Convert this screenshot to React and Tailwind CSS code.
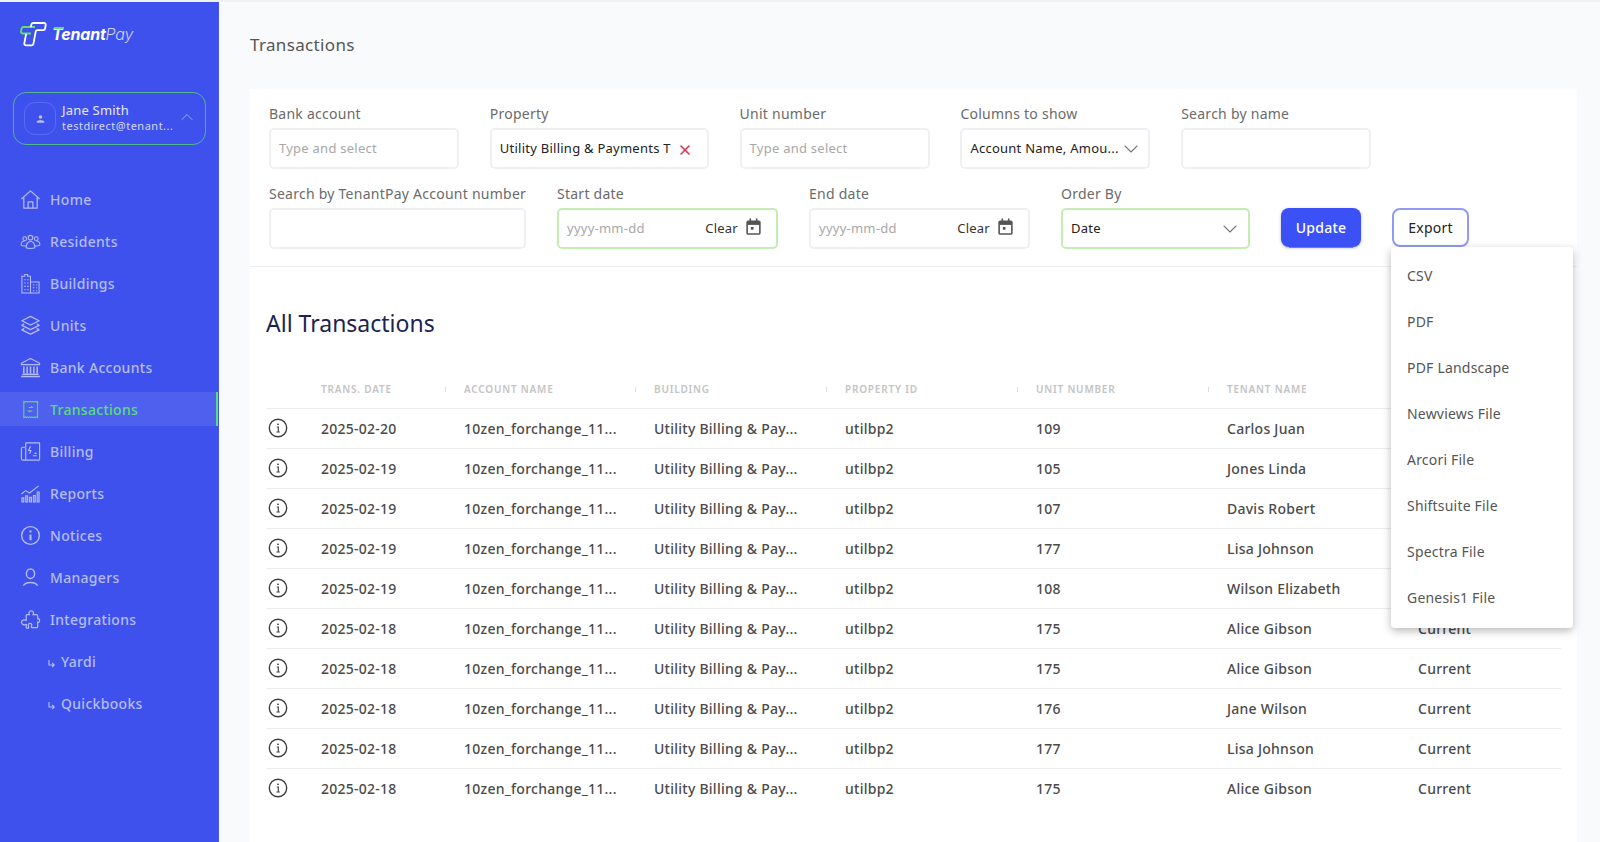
import React from 'react';
import { ChevronDown, ChevronUp, X } from 'lucide-react';

const navIcon = 'w-[21px] h-[21px] shrink-0';

const icons = {
    home: (
        <svg viewBox="0 0 22 22" fill="none" stroke="currentColor" strokeWidth="1.3" strokeLinejoin="round" className={navIcon}>
            <path d="M1.5 10.5 11 2l9.5 8.5" />
            <path d="M4 9v11h14V9" />
            <path d="M8.5 20v-6.5h5V20" />
        </svg>
    ),
    residents: (
        <svg viewBox="0 0 22 22" fill="none" stroke="currentColor" strokeWidth="1.1" className={navIcon}>
            <circle cx="11" cy="7" r="2.4" />
            <circle cx="5" cy="8" r="2" />
            <circle cx="17" cy="8" r="2" />
            <path d="M6.5 17.5c0-4 2-6.5 4.500-6.500s4.500 2.500 4.500 6.500c-1.500 1-7.500 1-9 0Z" />
            <path d="M6.500 15.500c-2 .5-4.500 0-5.300-1 0-2.500 1.300-4 3.800-4" />
            <path d="M15.500 15.500c2 .5 4.500 0 5.300-1 0-2.500-1.300-4-3.800-4" />
        </svg>
    ),
    buildings: (
        <svg viewBox="0 0 22 22" fill="none" stroke="currentColor" strokeWidth="1.1" className={navIcon}>
            <path d="M2 21V3.500h3V1.500h3v2h3V21Z" />
            <path d="M11 9.500h9V21h-9" />
            <path d="M4.500 7h1.500M7.500 7H9M4.500 10.500h1.500M7.500 10.500H9M4.500 14h1.500M7.500 14H9M4.500 17.500h1.500M7.500 17.500H9M13.500 12.500h1.500M17 12.500h1M13.500 15.500h1.500M17 15.500h1M13.500 18.500h1.500M17 18.500h1" />
        </svg>
    ),
    units: (
        <svg viewBox="0 0 22 22" fill="none" stroke="currentColor" strokeWidth="1.400" strokeLinejoin="round" className={navIcon}>
            <path d="M11 1.500 20 6l-9 4.500L2 6Z" />
            <path d="M4.500 9.200 2 10.800l9 4.500 9-4.500-2.500-1.600" />
            <path d="M4.500 14 2 15.500l9 4.500 9-4.500-2.500-1.500" />
        </svg>
    ),
    bank: (
        <svg viewBox="0 0 22 22" fill="none" stroke="currentColor" strokeWidth="1.200" strokeLinejoin="round" className={navIcon}>
            <path d="M11 1.500 20.500 6.500v1.500h-19V6.500Z" />
            <path d="M4 10v7M7.500 10v7M11 10v7M14.500 10v7M18 10v7" strokeWidth="1.600" />
            <path d="M2.500 18h17M1.200 20.500h19.600" strokeWidth="1.600" />
        </svg>
    ),
    transactions: (
        <svg viewBox="0 0 22 22" fill="none" stroke="currentColor" strokeWidth="1.100" className={navIcon}>
            <path d="M4 2.500l1.200.8 1.200-.8 1.200.8 1.200-.8 1.200.8 1.200-.8 1.200.8 1.200-.8 1.200.8 1.200-.8 1.200.8 1.200-.8V19.500l-1.200-.8-1.200.8-1.200-.8-1.200.8-1.200-.8-1.200.8-1.200-.8-1.200.8-1.200-.8-1.200.8-1.200-.8-1.200.8Z" />
            <path d="M9 9h4l-1.300-1.300M13 12.500H9l1.300 1.300" />
        </svg>
    ),
    billing: (
        <svg viewBox="0 0 22 22" fill="none" stroke="currentColor" strokeWidth="1.200" strokeLinejoin="round" className={navIcon}>
            <path d="M6 6.500H3a1.500 1.500 0 0 0-1.500 1.500v10.500A1.500 1.500 0 0 0 3 20h16.500a1 1 0 0 0 1-1V2H6Z" />
            <path d="M6 20V7" />
            <path d="M11 5.500 9 10h2.500L10 13.500" />
            <path d="M13.500 15.500h4M15 13h2.500" />
        </svg>
    ),
    reports: (
        <svg viewBox="0 0 22 22" fill="none" stroke="currentColor" strokeWidth="1.100" className={navIcon}>
            <path d="M1.500 11.500 6 8l4 2.500L19.500 3" />
            <path d="M2 20v-4.500h2V20ZM6 20v-6.500h2V20ZM10 20v-5h2V20ZM14 20v-7h2v7ZM18 20V9.500h2V20Z" fill="currentColor" fillOpacity="0.4" />
        </svg>
    ),
    notices: (
        <svg viewBox="0 0 22 22" fill="none" stroke="currentColor" strokeWidth="1.500" className={navIcon}>
            <circle cx="11" cy="11" r="9.300" />
            <path d="M11 10v6" strokeWidth="2.200" />
            <circle cx="11" cy="6.800" r="1.200" fill="currentColor" stroke="none" />
        </svg>
    ),
    managers: (
        <svg viewBox="0 0 22 22" fill="none" stroke="currentColor" strokeWidth="1.500" className={navIcon}>
            <ellipse cx="11" cy="7" rx="4.300" ry="5" />
            <path d="M3.500 19.500c1.500-2.200 4.300-3.300 7.500-3.300s6 1.100 7.500 3.300" />
        </svg>
    ),
    integrations: (
        <svg viewBox="0 0 22 22" fill="none" stroke="currentColor" strokeWidth="1.300" strokeLinejoin="round" className={navIcon}>
            <path d="M7 6h3c-1-1.200-1-4 1.800-4s2.800 2.800 1.700 4h3.500a1.500 1.500 0 0 1 1.500 1.500v3c1.200-.8 2-.5 2 1.500s-1 2.300-2 1.500v5a1 1 0 0 1-1 1H12v-1.500c1-1.500 0-3-1.500-3s-2.500 1.500-1.500 3V20H7.500a1 1 0 0 1-1-1v-3c-1.800 1-5 .5-5-2s3.200-3 5-2V7a1 1 0 0 1 .5-1Z" />
        </svg>
    ),
};

const navItems = [
    { label: 'Home', icon: 'home' },
    { label: 'Residents', icon: 'residents' },
    { label: 'Buildings', icon: 'buildings' },
    { label: 'Units', icon: 'units' },
    { label: 'Bank Accounts', icon: 'bank' },
    { label: 'Transactions', icon: 'transactions', active: true },
    { label: 'Billing', icon: 'billing' },
    { label: 'Reports', icon: 'reports' },
    { label: 'Notices', icon: 'notices' },
    { label: 'Managers', icon: 'managers' },
    { label: 'Integrations', icon: 'integrations' },
];

const exportOptions = ['CSV', 'PDF', 'PDF Landscape', 'Newviews File', 'Arcori File', 'Shiftsuite File', 'Spectra File', 'Genesis1 File'];

const columns = ['TRANS. DATE', 'ACCOUNT NAME', 'BUILDING', 'PROPERTY ID', 'UNIT NUMBER', 'TENANT NAME', 'STATUS'];

const rows = [
    ['2025-02-20', '109', 'Carlos Juan'],
    ['2025-02-19', '105', 'Jones Linda'],
    ['2025-02-19', '107', 'Davis Robert'],
    ['2025-02-19', '177', 'Lisa Johnson'],
    ['2025-02-19', '108', 'Wilson Elizabeth'],
    ['2025-02-18', '175', 'Alice Gibson'],
    ['2025-02-18', '175', 'Alice Gibson'],
    ['2025-02-18', '176', 'Jane Wilson'],
    ['2025-02-18', '177', 'Lisa Johnson'],
    ['2025-02-18', '175', 'Alice Gibson'],
];

function Logo() {
    return (
        <div className="flex items-center h-[26px] ml-[19px] mt-[19px]">
            <svg width="28" height="25" viewBox="0 0 28 25" fill="none" strokeWidth="1.800" strokeLinejoin="round" className="shrink-0">
                <path d="M16 5H4.500A2 2 0 0 0 2.600 6.500L2 9.500a1.700 1.700 0 0 0 1.700 2H12" stroke="#5fe06f" />
                <path d="M11.800 5l.5-2.300A2 2 0 0 1 14.200 1H25a1.700 1.700 0 0 1 1.700 2l-.6 3.500a2 2 0 0 1-2 1.700H18.500a1.800 1.800 0 0 0-1.800 1.500l-2.300 12.200a1.700 1.700 0 0 1-1.700 1.400H7a1.700 1.700 0 0 1-1.700-2l1.800-9.500" stroke="#ffffff" />
            </svg>
            <span className="relative ml-[5px] text-[16px] italic leading-none text-white font-['Inter',sans-serif] tracking-[-0.2px]">
                <span className="font-bold">Tenant</span>
                <span className="font-light text-[#cfd4fb]">Pay</span>
                <span className="absolute left-[2px] top-[1px] w-[10px] h-[2px] bg-[#5fe06f]" />
            </span>
        </div>
    );
}

function UserCard() {
    return (
        <div className="ml-[13px] mt-[45px] h-[53px] w-[193px] rounded-[13px] border border-[#4fb98a] flex items-center pl-[10px] pr-[8px]">
            <div className="w-[32px] h-[33px] rounded-[11px] border border-[#5c6cf2] flex items-center justify-center shrink-0">
                <svg width="9" height="10" viewBox="0 0 11 11" fill="#b9c0fa">
                    <circle cx="5.500" cy="3" r="2.200" />
                    <path d="M1 10.200V8.600c0-.8 1.800-1.600 4.500-1.600s4.500.8 4.500 1.600v1.600Z" />
                </svg>
            </div>
            <div className="ml-[6px] min-w-0 flex-1 pb-[2px]">
                <div className="text-[13px] leading-[16px] tracking-[0.2px] text-[#e4e7fe]">Jane Smith</div>
                <div className="text-[11px] leading-[15px] tracking-[0.5px] text-[#d4d9fd] whitespace-nowrap">testdirect@tenant...</div>
            </div>
            <ChevronUp className="w-[20px] h-[20px] text-[#a6aff8] shrink-0 mb-[4px]" strokeWidth={1.1} />
        </div>
    );
}

function Sidebar() {
    return (
        <aside className="w-[219px] shrink-0 bg-[#3f51ed] text-[#b4bcfa] border-r border-[#4657f5]">
            <Logo />
            <UserCard />
            <nav className="mt-[33px]">
                {navItems.map((item) => (
                    <div key={item.label} className="h-[42px] flex items-center">
                        <div
                            className={
                                item.active
                                    ? 'w-full h-[34px] flex items-center pl-[20px] gap-[9px] bg-[#4f60ef] text-[#5ade7a] border-r-2 border-[#5ade7a]'
                                    : 'w-full h-[34px] flex items-center pl-[20px] gap-[9px]'
                            }
                        >
                            {icons[item.icon]}
                            <span className="text-[14px] tracking-[0.3px] font-medium">{item.label}</span>
                        </div>
                    </div>
                ))}
                {['Yardi', 'Quickbooks'].map((label) => (
                    <div key={label} className="h-[42px] flex items-center pl-[47px]">
                        <svg width="9" height="9" viewBox="0 0 9 9" fill="none" stroke="currentColor" strokeWidth="1.100" className="mt-[4px]">
                            <path d="M2 1v5h5M5.200 4l2 2-2 2" />
                        </svg>
                        <span className="ml-[5px] text-[14px] tracking-[0.3px] font-medium">{label}</span>
                    </div>
                ))}
            </nav>
        </aside>
    );
}

function Field({ label, width, children, green }) {
    return (
        <div style={{ width }} className="shrink-0">
            <div className="h-[20px] mb-[5px] text-[14px] leading-[21px] tracking-[0.25px] text-[#6b6b6b] whitespace-nowrap">{label}</div>
            <div
                className={
                    green
                        ? 'h-[41px] rounded-[5px] border-2 border-[#c3edb5] bg-white flex items-center px-[8px] text-[13px] tracking-[0.25px]'
                        : 'h-[41px] rounded-[5px] border-2 border-[#eef0f3] bg-white flex items-center px-[8px] text-[13px] tracking-[0.25px]'
                }
            >
                {children}
            </div>
        </div>
    );
}

function DateInput() {
    return (
        <>
            <span className="text-[#a8a8a8] flex-1">yyyy-mm-dd</span>
            <span className="text-[#333] mr-[8px]">Clear</span>
            <svg width="15" height="17" viewBox="0 0 14 16" fill="none" stroke="#555" strokeWidth="1.500" className="mr-[7px] mb-[4px]">
                <rect x="1" y="3" width="12" height="12" rx="1" />
                <path d="M1 5h12" strokeWidth="3" />
                <path d="M4 .5v3M10 .5v3" />
                <rect x="4.500" y="8.500" width="2.500" height="2.500" fill="#555" stroke="none" />
            </svg>
        </>
    );
}

function Filters() {
    return (
        <div className="pl-[19px] pt-[14px] h-[178px] border-b border-[#eceef3]">
            <div className="flex gap-[30.8px]">
                <Field label="Bank account" width="190px">
                    <span className="text-[#a8a8a8]">Type and select</span>
                </Field>
                <Field label="Property" width="219px">
                    <span className="text-[#222] whitespace-nowrap">Utility Billing &amp; Payments T</span>
                    <X className="w-[16px] h-[16px] ml-[6px] mt-[2px] text-[#e0314f]" strokeWidth={2.4} />
                </Field>
                <Field label="Unit number" width="190px">
                    <span className="text-[#a8a8a8]">Type and select</span>
                </Field>
                <Field label="Columns to show" width="190px">
                    <span className="text-[#222] flex-1 whitespace-nowrap">Account Name, Amou...</span>
                    <ChevronDown className="w-[24px] h-[24px] text-[#777] mr-[-2px] shrink-0" strokeWidth={1.1} />
                </Field>
                <Field label="Search by name" width="190px" />
            </div>
            <div className="flex gap-[31px] mt-[14px]">
                <Field label="Search by TenantPay Account number" width="257px" />
                <Field label="Start date" width="221px" green>
                    <DateInput />
                </Field>
                <Field label="End date" width="221px">
                    <DateInput />
                </Field>
                <Field label="Order By" width="189px" green>
                    <span className="text-[#222] flex-1">Date</span>
                    <ChevronDown className="w-[24px] h-[24px] text-[#777] mr-[-2px] shrink-0" strokeWidth={1.1} />
                </Field>
                <div className="pt-[25px]">
                    <button className="w-[80px] h-[39px] rounded-[8px] bg-[#3b50f5] text-white text-[14px] tracking-[0.25px] font-medium shadow-[0_9px_0_-8px_#2fb84f,0_1px_3px_rgba(0,0,0,0.3)]">Update</button>
                </div>
                <div className="pt-[25px] relative">
                    <button className="w-[77px] h-[39px] rounded-[8px] border-2 border-[#8f9bf5] bg-white text-[#222] text-[14px] tracking-[0.25px]">Export</button>
                    <div className="absolute left-[-1px] top-[64px] w-[182px] h-[381px] z-10 bg-white rounded-[4px] shadow-[0_3px_8px_rgba(0,0,0,0.28)] pt-[6px]">
                        {exportOptions.map((option) => (
                            <div key={option} className="h-[45.9px] flex items-center px-[16px] text-[14px] text-[#555] tracking-[0.2px]">
                                {option}
                            </div>
                        ))}
                    </div>
                </div>
            </div>
        </div>
    );
}

function TransactionsTable() {
    return (
        <div className="px-[16px]">
            <h2 className="mt-[38px] text-[23px] leading-[36px] text-[#1c2452]">All Transactions</h2>
            <table className="mt-[31px] w-[1295px] table-fixed border-collapse">
                <colgroup>
                    <col className="w-[55px]" />
                    <col className="w-[143px]" />
                    <col className="w-[190px]" />
                    <col className="w-[191px]" />
                    <col className="w-[191px]" />
                    <col className="w-[191px]" />
                    <col className="w-[191px]" />
                    <col className="w-[143px]" />
                </colgroup>
                <thead>
                    <tr className="h-[36px] border-b border-[#ececec]">
                        <th />
                        {columns.map((col) => (
                            <th key={col} className="relative text-left font-semibold text-[10px] tracking-[0.8px] text-[#c4c4c4]">
                                {col}
                                <span className="absolute right-[18px] top-[15px] h-[5px] w-px bg-[#dedede]" />
                            </th>
                        ))}
                    </tr>
                </thead>
                <tbody>
                    {rows.map((row, i) => (
                        <tr key={i} className="h-[40px] border-b border-[#ececec] last:border-b-0 text-[14px] font-medium text-[#4a4a4a] tracking-[0.25px]">
                            <td>
                                <svg width="20" height="20" viewBox="0 0 20 20" fill="none" stroke="#3c3c3c" strokeWidth="1.400" className="ml-[2px] block">
                                    <circle cx="10" cy="10" r="8.700" />
                                    <path d="M8.800 9h1.500v5M8.500 14h3.300" strokeWidth="1.100" />
                                    <circle cx="10" cy="6.300" r="0.900" fill="#3c3c3c" stroke="none" />
                                </svg>
                            </td>
                            <td>{row[0]}</td>
                            <td>10zen_forchange_11...</td>
                            <td>Utility Billing &amp; Pay...</td>
                            <td>utilbp2</td>
                            <td>{row[1]}</td>
                            <td>{row[2]}</td>
                            <td>Current</td>
                        </tr>
                    ))}
                </tbody>
            </table>
        </div>
    );
}

export default function App() {
    return (
        <div className="flex h-[842px] overflow-hidden border-t-2 border-[#f1f2f4] bg-[#f9fafc] font-['Noto_Sans',sans-serif]">
            <Sidebar />
            <main className="flex-1 min-w-0 pl-[31px] pr-[23px]">
                <h1 className="mt-[31px] h-[26px] text-[17px] leading-[24px] tracking-[0.35px] text-[#555]">Transactions</h1>
                <div className="mt-[30px] bg-white h-[760px]">
                    <Filters />
                    <TransactionsTable />
                </div>
            </main>
        </div>
    );
}
